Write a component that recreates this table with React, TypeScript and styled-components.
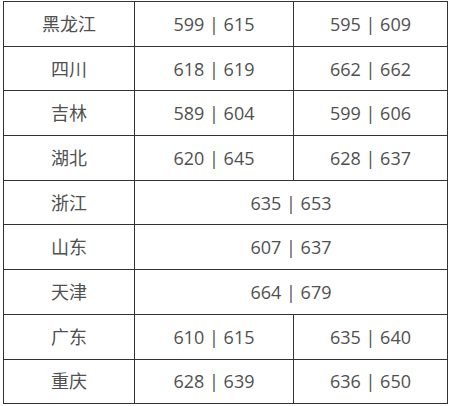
import styled, { createGlobalStyle } from "styled-components";

const GlobalStyle = createGlobalStyle`
  html, body {
    margin: 0;
    padding: 0;
    background: #fff;
  }
`;

const Page = styled.div`
  padding: 1px 0 0 3px;
`;

const Table = styled.table`
  border-collapse: collapse;
  table-layout: fixed;
  width: 444px;
  font-family: "Open Sans", "Noto Sans CJK SC", sans-serif;
  font-size: 18px;
  color: #505050;
`;

const Col = styled.col<{ $w: number }>`
  width: ${(p) => p.$w}px;
`;

const Row = styled.tr<{ $soft?: boolean }>`
  height: 44.7px;
  & > td {
    border-top: 1px solid ${(p) => (p.$soft ? "#a8a8a8" : "#333")};
  }
`;

const Cell = styled.td`
  border-left: 1px solid #333;
  border-right: 1px solid #333;
  border-bottom: 1px solid #333;
  text-align: center;
  vertical-align: middle;
  padding: 0;
  line-height: 1;
  white-space: nowrap;
`;

type Entry = { name: string; scores: string[]; soft?: boolean };

const rows: Entry[] = [
  { name: "黑龙江", scores: ["599 | 615", "595 | 609"] },
  { name: "四川", scores: ["618 | 619", "662 | 662"] },
  { name: "吉林", scores: ["589 | 604", "599 | 606"], soft: true },
  { name: "湖北", scores: ["620 | 645", "628 | 637"] },
  { name: "浙江", scores: ["635 | 653"] },
  { name: "山东", scores: ["607 | 637"], soft: true },
  { name: "天津", scores: ["664 | 679"] },
  { name: "广东", scores: ["610 | 615", "635 | 640"] },
  { name: "重庆", scores: ["628 | 639", "636 | 650"], soft: true },
];

export default function App() {
  return (
    <>
      <GlobalStyle />
      <Page>
        <Table>
          <colgroup>
            <Col $w={131} />
            <Col $w={159} />
            <Col $w={154} />
          </colgroup>
          <tbody>
            {rows.map((r) => (
              <Row key={r.name} $soft={r.soft}>
                <Cell>{r.name}</Cell>
                {r.scores.map((s, i) => (
                  <Cell key={i} colSpan={r.scores.length === 1 ? 2 : 1}>
                    {s}
                  </Cell>
                ))}
              </Row>
            ))}
          </tbody>
        </Table>
      </Page>
    </>
  );
}
